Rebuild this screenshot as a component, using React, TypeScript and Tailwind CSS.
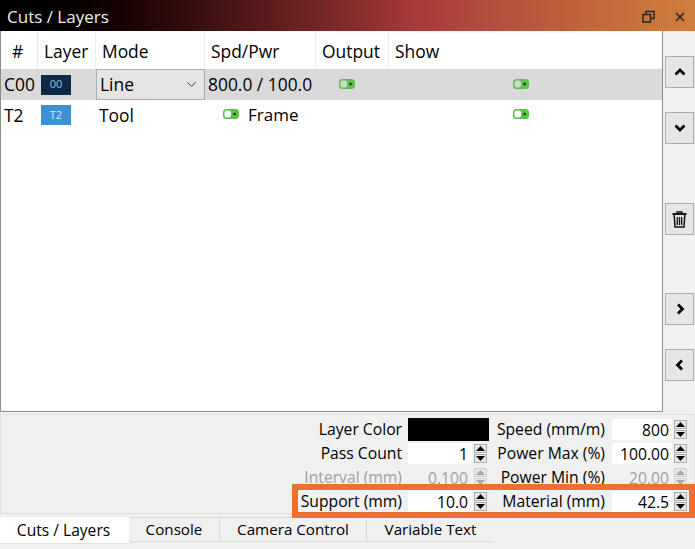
import { ChevronDown, X } from "lucide-react";

const headers = [
  { label: "#", className: "pl-[11px]" },
  { label: "Layer", className: "pl-[6px]" },
  { label: "Mode", className: "pl-[6px]" },
  { label: "Spd/Pwr", className: "pl-[6px]" },
  { label: "Output", className: "pl-[6px]" },
  { label: "Show", className: "pl-[6px]" },
];

const columns = "grid grid-cols-[37px_58px_109px_111px_73px_1fr]";

function Toggle({ off = false }: { off?: boolean }) {
  return (
    <svg width="16" height="10" viewBox="0 0 16 10" className="block mb-[2px]">
      <rect x="0" y="0" width="16" height="10" rx="3.5" fill="#5cc04c" />
      <rect x="1.5" y="1.5" width="6.5" height="7" rx="2" fill={off ? "#d4d4d4" : "#ffffff"} />
      <circle cx="11.5" cy="5" r="1.3" fill="#123312" />
    </svg>
  );
}

function Spinner({ disabled = false }: { disabled?: boolean }) {
  const tri = disabled ? "#a8a8a8" : "#000000";
  const box = disabled ? "border-[#d0d0d0]" : "border-[#adadad]";
  return (
    <div className="flex flex-col w-[13px] gap-px">
      <div className={`h-[9px] border flex items-center justify-center bg-[#e6e6e6] ${box}`}>
        <svg width="9" height="5" viewBox="0 0 9 5"><path d="M4.5 0 L9 5 L0 5 Z" fill={tri} /></svg>
      </div>
      <div className={`h-[9px] border flex items-center justify-center bg-[#e6e6e6] ${box}`}>
        <svg width="9" height="5" viewBox="0 0 9 5"><path d="M4.5 5 L9 0 L0 0 Z" fill={tri} /></svg>
      </div>
    </div>
  );
}

function SideButton({ children, className = "" }: { children: React.ReactNode; className?: string }) {
  return (
    <button className={`w-[29px] h-[32px] border border-[#adadad] bg-[#e6e6e6] flex items-center justify-center text-black ${className}`}>
      {children}
    </button>
  );
}

function Chevron({ d }: { d: string }) {
  return (
    <svg width="14" height="14" viewBox="0 0 14 14" fill="none" stroke="#000" strokeWidth="2.8">
      <path d={d} />
    </svg>
  );
}

function Field({ value, disabled = false, width, pad }: { value: string; disabled?: boolean; width: string; pad: string }) {
  return (
    <div className={`flex items-center gap-[2px] ${width}`}>
      <div className={`flex-1 h-[21px] leading-[23px] text-right ${pad} ${disabled ? "text-[#a0a0a0]" : "bg-white text-black"}`}>
        {value}
      </div>
      <Spinner disabled={disabled} />
    </div>
  );
}

function FormRow({
  left,
  leftField,
  right,
  rightValue,
  rightDisabled = false,
  leftDisabled = false,
}: {
  left: string;
  leftField: React.ReactNode;
  right: string;
  rightValue: string;
  rightDisabled?: boolean;
  leftDisabled?: boolean;
}) {
  return (
    <div className="h-[24px] flex items-center justify-end pr-[7px]">
      <div className={`w-[120px] text-right pr-[6px] pt-[1px] ${leftDisabled ? "text-[#a0a0a0]" : ""}`}>{left}</div>
      <div className="w-[81px]">{leftField}</div>
      <div className="w-[123px] text-right pr-[7px] pt-[1px]">{right}</div>
      <Field value={rightValue} disabled={rightDisabled} width="w-[75px]" pad="pr-[3px]" />
    </div>
  );
}

export default function App() {
  return (
    <div className="relative w-[695px] h-[549px] overflow-hidden bg-[#f0f0f0] text-black text-[15.7px] font-['Open_Sans','Noto_Sans',sans-serif]">
      {/* title bar */}
      <div className="h-[31px] flex items-center pt-[2px] pl-[7px] pr-[8px] bg-gradient-to-r from-[#000000] via-[#a83a3a] via-60% to-[#cf7f3c] text-[#eeeeee] text-[17px]">
        <span className="flex-1">Cuts / Layers</span>
        <svg width="13" height="13" viewBox="0 0 13 13" fill="none" stroke="#2e2a28" strokeWidth="1.6" className="mr-[18px]">
          <rect x="1" y="4.5" width="7.5" height="7.5" />
          <path d="M4 4.5 V1.5 H12 V8.5 H8.5" />
        </svg>
        <X size={14} strokeWidth={3} color="#2e2a28" />
      </div>

      <div className="flex h-[381px]">
        {/* table */}
        <div className="w-[663px] bg-white border border-[#8c8c8c] border-t-0 text-[17.4px]">
          <div className={`${columns} h-[38px] items-center`}>
            {headers.map((h) => (
              <div key={h.label} className={`h-full flex items-center pt-[3px] border-r border-[#ececec] last:border-r-0 ${h.className}`}>
                {h.label}
              </div>
            ))}
          </div>
          <div className={`${columns} h-[31px] items-center bg-[#d9d9d9]`}>
            <div className="pl-[3px]">C00</div>
            <div className="pl-[3px]">
              <div className="w-[30px] h-[20px] bg-[#0f2a47] text-[#a8c0d8] text-[11px] flex items-center justify-center">00</div>
            </div>
            <div className="h-[31px] border border-[#adadad] bg-[#e4e4e4] flex items-center justify-between pl-[3px] pr-[5px]">
              <span>Line</span>
              <ChevronDown size={15} strokeWidth={1.2} />
            </div>
            <div className="pl-[3px] whitespace-nowrap">800.0 / 100.0</div>
            <div className="pl-[23px]"><Toggle off /></div>
            <div className="pl-[124px]"><Toggle off /></div>
          </div>
          <div className={`${columns} h-[30px] items-center`}>
            <div className="pl-[3px]">T2</div>
            <div className="pl-[3px]">
              <div className="w-[30px] h-[20px] bg-[#3f8fd4] text-[#d8ecfa] text-[11px] flex items-center justify-center">T2</div>
            </div>
            <div className="pl-[3px]">Tool</div>
            <div className="col-span-2 flex items-center pl-[18px]">
              <Toggle />
              <span className="ml-[9px] text-[17px]">Frame</span>
            </div>
            <div className="pl-[124px]"><Toggle /></div>
          </div>
        </div>

        {/* side buttons */}
        <div className="flex-1 flex flex-col items-center pt-[25px] pl-[1px]">
          <SideButton><Chevron d="M2.5 9.5 L7 5 L11.5 9.5" /></SideButton>
          <SideButton className="mt-[24px]"><Chevron d="M2.5 4.5 L7 9 L11.5 4.5" /></SideButton>
          <SideButton className="mt-[59px]">
            <svg width="15" height="17" viewBox="0 0 15 17" fill="none" stroke="#111" strokeWidth="1.4">
              <path d="M5 2.5 V1 H10 V2.5" />
              <path d="M0.5 3 H14.5" strokeWidth="2" />
              <path d="M2.2 4 L3 16 H12 L12.8 4" strokeWidth="1.5" />
              <path d="M5.3 6 V14 M7.5 6 V14 M9.7 6 V14" strokeWidth="1.3" />
            </svg>
          </SideButton>
          <SideButton className="mt-[58px]"><Chevron d="M5 2.5 L9.5 7 L5 11.5" /></SideButton>
          <SideButton className="mt-[24px]"><Chevron d="M9 2.5 L4.5 7 L9 11.5" /></SideButton>
        </div>
      </div>

      {/* layer settings */}
      <div className="mt-[2px] h-[100px] border border-[#e0e0e0] pt-[2px]">
        <FormRow
          left="Layer Color"
          leftField={<div className="w-[81px] h-[23px] bg-black" />}
          right="Speed (mm/m)"
          rightValue="800"
        />
        <FormRow left="Pass Count" leftField={<Field value="1" width="w-[79px]" pad="pr-[4px]" />} right="Power Max (%)" rightValue="100.00" />
        <FormRow
          left="Interval (mm)"
          leftDisabled
          leftField={<Field value="0.100" disabled width="w-[79px]" pad="pr-[4px]" />}
          right="Power Min (%)"
          rightValue="20.00"
          rightDisabled
        />
        <FormRow left="Support (mm)" leftField={<Field value="10.0" width="w-[79px]" pad="pr-[4px]" />} right="Material (mm)" rightValue="42.5" />
      </div>

      {/* tabs */}
      <div className="flex h-[25px] mt-[3px] items-start text-[15.2px]">
        <div className="w-[129px] h-[27px] pt-[1px] pr-[2px] bg-white flex items-center justify-center border-b border-[#e0e0e0] text-[15.6px]">Cuts / Layers</div>
        <div className="w-[91px] h-[25px] border-t border-r border-b border-[#d9d9d9] flex items-center justify-center">Console</div>
        <div className="w-[147px] h-[25px] border-t border-r border-b border-[#d9d9d9] flex items-center justify-center">Camera Control</div>
        <div className="w-[127px] h-[25px] border-t border-b border-[#d9d9d9] flex items-center justify-center">Variable Text</div>
      </div>

      {/* orange annotation over the last form row */}
      <div className="absolute left-[292px] top-[484px] w-[403px] h-[34px] border-[6px] border-[#ec7131] pointer-events-none" />
    </div>
  );
}
